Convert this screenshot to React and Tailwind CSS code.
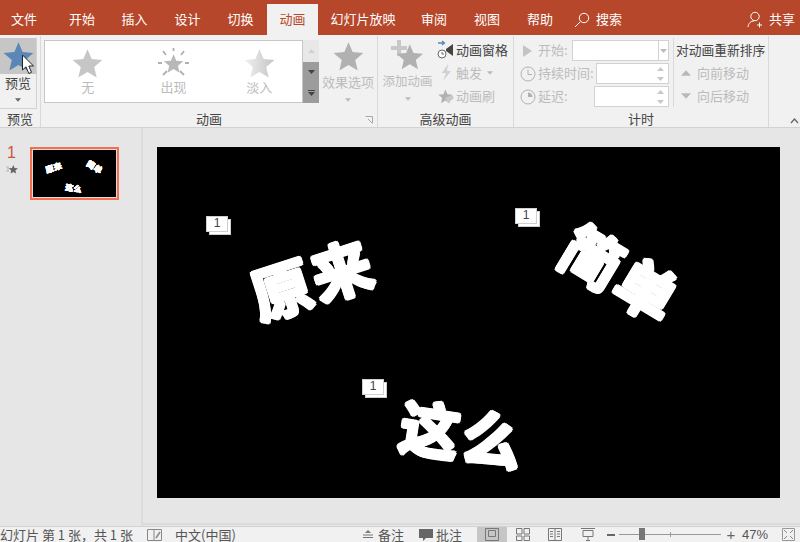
import React from 'react'

const STAR = '12,1 15.2,8.6 23.5,9.3 17.2,14.7 19.1,22.8 12,18.5 4.9,22.8 6.8,14.7 0.5,9.3 8.8,8.6'

function Star({ size = 30, color = '#b1b1b1', className = '' }) {
  return (
    <svg width={size} height={size} viewBox="0 0 24 24" className={className}>
      <polygon points={STAR} fill={color} />
    </svg>
  )
}

function Caret({ color = '#8a8a8a', up = false, w = 7, h = 4 }) {
  return (
    <svg width={w} height={h} viewBox="0 0 7 4" className="block">
      <polygon points={up ? '0,4 7,4 3.5,0' : '0,0 7,0 3.5,4'} fill={color} />
    </svg>
  )
}

function Group({ label, width, children, corner }) {
  return (
    <div className={`flex flex-col shrink-0 relative border-r border-[#d9d9d9] ${width}`}>
      <div className="h-[74px] flex">{children}</div>
      <div className="h-[17px] mt-[1px] text-center text-[13px] leading-[17px] text-[#444]">{label}</div>
      {corner && (
        <svg width="8" height="8" viewBox="0 0 8 8" className="absolute right-[4px] bottom-[3px]">
          <path d="M0.5 0.5H7.5V7.5M3 3L7 7" stroke="#a8a8a8" fill="none" />
        </svg>
      )}
    </div>
  )
}

function GalleryItem({ label, children }) {
  return (
    <div className="w-[86px] flex flex-col items-center pt-[7px]">
      {children}
      <span className="text-[13px] leading-[18px] text-[#bcbcbc] mt-[-1px]">{label}</span>
    </div>
  )
}

function ClockIcon({ pie = false }) {
  return (
    <svg width="16" height="16" viewBox="0 0 16 16" className="shrink-0">
      <circle cx="8" cy="8" r="7" fill="none" stroke="#b1b1b1" />
      {pie ? <path d="M8 8V3.5A4.5 4.5 0 0 1 12.5 8Z" fill="#b1b1b1" /> : <path d="M8 3.5V8.5H12" stroke="#b1b1b1" fill="none" />}
    </svg>
  )
}

function Spinner() {
  return (
    <div className="ml-auto flex flex-col gap-[6px] pr-[4px]">
      <Caret color="#c8c8c8" up />
      <Caret color="#c8c8c8" />
    </div>
  )
}

// text on the slide, placed on the slide's own canvas
function SlideWords() {
  const word = "absolute font-bold text-white whitespace-nowrap leading-none text-[60px] tracking-[3px] [text-shadow:2px_0_0_#fff,-2px_0_0_#fff,0_2px_0_#fff,0_-2px_0_#fff,1.5px_1.5px_0_#fff,-1.5px_1.5px_0_#fff,1.5px_-1.5px_0_#fff,-1.5px_-1.5px_0_#fff]"
  return (
    <>
      <div className={`${word} left-[92px] top-[100px] -rotate-[18deg]`}>原来</div>
      <div className={`${word} left-[402px] top-[95px] rotate-[31deg]`}>简单</div>
      <div className={`${word} left-[243px] top-[255px] rotate-[9deg]`}>这么</div>
    </>
  )
}

function Badge({ className }) {
  return (
    <div className={`absolute w-[22px] h-[16px] ${className}`}>
      <div className="absolute left-[3px] top-[3px] w-[22px] h-[16px] bg-white border border-[#cfcfcf]" />
      <div className="absolute inset-0 bg-white border border-[#cfcfcf] text-[12px] leading-[13px] text-center text-[#444] font-['Liberation_Sans',sans-serif]">1</div>
    </div>
  )
}

function Tab({ width, active, children }) {
  return (
    <div className={`${width} shrink-0 h-[31px] text-center text-[13px] leading-[30px] ${active ? 'bg-[#f1f1f1] text-[#b7472a]' : 'text-white'}`}>
      {children}
    </div>
  )
}

export default function App() {
  return (
    <div className="w-[800px] h-[542px] overflow-hidden flex flex-col bg-[#e6e6e6] font-['Noto_Sans_CJK_SC',sans-serif] relative">
      {/* tabs */}
      <div className="h-[35px] bg-[#b7472a] flex items-end shrink-0">
        <Tab width="w-[48px]">文件</Tab>
        <div className="w-[8px]" />
        <Tab width="w-[52px]">开始</Tab>
        <Tab width="w-[53px]">插入</Tab>
        <Tab width="w-[53px]">设计</Tab>
        <Tab width="w-[53px]">切换</Tab>
        <Tab width="w-[51px]" active>动画</Tab>
        <Tab width="w-[90px]">幻灯片放映</Tab>
        <Tab width="w-[52px]">审阅</Tab>
        <Tab width="w-[54px]">视图</Tab>
        <Tab width="w-[52px]">帮助</Tab>
        <div className="h-[31px] flex items-center ml-[8px] text-white text-[13px] gap-[6px]">
          <svg width="16" height="16" viewBox="0 0 16 16">
            <circle cx="10" cy="6" r="4.7" fill="none" stroke="white" />
            <path d="M6.5 9.5L1 15" stroke="white" />
          </svg>
          <span className="pb-[1px]">搜索</span>
        </div>
        <div className="h-[31px] flex items-center ml-auto pr-[5px] text-white text-[13px] gap-[6px]">
          <svg width="16" height="17" viewBox="0 0 16 17">
            <circle cx="8" cy="5.5" r="4.2" fill="none" stroke="white" />
            <path d="M1 16C1.5 12 4 10 7 10M10 14H15M12.5 11.5V16.5" stroke="white" fill="none" />
          </svg>
          <span className="pb-[1px]">共享</span>
        </div>
      </div>

      {/* ribbon */}
      <div className="h-[93px] bg-[#f1f1f1] flex shrink-0 pt-[1px] border-b border-[#d2d2d2]">
        <Group label="预览" width="w-[41px]">
          <div className="w-[37px] h-[71px] border-r border-b border-[#d2d2d2] flex flex-col items-center mt-[2px]">
            <div className="w-full h-[36px] bg-[#c6c6c6] flex items-center justify-center">
              <Star size={31} color="#5a87b8" />
            </div>
            <span className="text-[13px] leading-[18px] text-[#444]">预览</span>
            <div className="mt-[6px]"><Caret color="#666" w={6} /></div>
          </div>
        </Group>

        <Group label="动画" width="w-[337px]" corner>
          <div className="mt-[4px] ml-[3px] flex h-[63px] w-[276px] shrink-0">
            <div className="w-[259px] border border-[#c6c6c6] bg-white flex">
              <GalleryItem label="无"><Star size={31} color="#c6c6c6" /></GalleryItem>
              <GalleryItem label="出现">
                <svg width="31" height="31" viewBox="0 0 31 31">
                  <g transform="translate(5.5 5.5) scale(0.84)"><polygon points={STAR} fill="#b8b8b8" /></g>
                  <path d="M15.5 0V3M5 3L8 7M26 3L23 7M0 15H4M31 15H27M5 27L9 23M26 27L22 23" stroke="#b0b0b0" strokeWidth="1.8" />
                </svg>
              </GalleryItem>
              <GalleryItem label="淡入">
                <svg width="31" height="31" viewBox="0 0 24 24">
                  <defs>
                    <linearGradient id="fade" x1="0" x2="1" y1="0" y2="0">
                      <stop offset="0" stopColor="#f0f0f0" />
                      <stop offset="1" stopColor="#c4c4c4" />
                    </linearGradient>
                  </defs>
                  <polygon points={STAR} fill="url(#fade)" />
                </svg>
              </GalleryItem>
            </div>
            <div className="w-[16px] flex flex-col shrink-0">
              <div className="h-[22px] bg-[#e8e8e8] flex items-center justify-center"><Caret color="#d0d0d0" up /></div>
              <div className="h-[20px] bg-[#9c9c9c] flex items-center justify-center"><Caret color="#444" /></div>
              <div className="h-[21px] bg-[#9c9c9c] flex flex-col items-center justify-center gap-[1px]">
                <div className="w-[7px] h-[1px] bg-[#444]" />
                <Caret color="#444" />
              </div>
            </div>
          </div>
          <div className="flex-1 flex flex-col items-center pt-[5px] -ml-[1px]">
            <Star size={31} color="#b1b1b1" />
            <span className="text-[13px] leading-[18px] text-[#bcbcbc] mt-[1px] whitespace-nowrap">效果选项</span>
            <div className="mt-[7px]"><Caret color="#bbb" w={6} /></div>
          </div>
        </Group>

        <Group label="高级动画" width="w-[136px]">
          <div className="w-[59px] flex flex-col items-center pt-[4px] shrink-0">
            <svg width="34" height="32" viewBox="0 0 34 32">
              <path d="M6 0H10V6H16V10H10V16H6V10H0V6H6Z" fill="#c8c8c8" />
              <g transform="translate(5 3) scale(1.15)"><polygon points={STAR} fill="#b1b1b1" /></g>
            </svg>
            <span className="text-[12.5px] leading-[18px] text-[#bcbcbc] whitespace-nowrap">添加动画</span>
            <div className="mt-[7px]"><Caret color="#bbb" w={6} /></div>
          </div>
          <div className="flex flex-col pt-[2px] text-[13px] leading-[23px] text-[#bcbcbc]">
            <div className="flex items-center gap-[1px] text-[#444]">
              <svg width="18" height="20" viewBox="0 0 18 20">
                <path d="M1 3H7M5 1L7.5 3L5 5" stroke="#5a87b8" strokeWidth="1.3" fill="none" />
                <path d="M9 9L16 4V16L9 11Z" fill="#444" />
                <circle cx="5" cy="14" r="4" fill="white" stroke="#666" />
                <path d="M5 12V14H7" stroke="#666" fill="none" />
              </svg>
              动画窗格
            </div>
            <div className="flex items-center gap-[1px]">
              <svg width="18" height="20" viewBox="0 0 18 20">
                <path d="M11 1L5 10H9L6 18L14 8H10Z" fill="#d0d0d0" />
              </svg>
              <span>触发</span>
              <span className="ml-[4px]"><Caret color="#bbb" w={6} /></span>
            </div>
            <div className="flex items-center gap-[1px]">
              <svg width="18" height="20" viewBox="0 0 18 20">
                <g transform="translate(1 3) scale(0.62)"><polygon points={STAR} fill="#b1b1b1" /></g>
                <path d="M8 12L15 9L17 12L11 17Z" fill="#c8c8c8" />
              </svg>
              动画刷
            </div>
          </div>
        </Group>

        <Group label="计时" width="w-[255px]">
          <div className="w-[159px] flex flex-col pl-[6px] pt-[4px] gap-[2px] text-[13px] text-[#bcbcbc] shrink-0">
            <div className="h-[21px] flex items-center">
              <svg width="16" height="16" viewBox="0 0 16 16" className="shrink-0"><polygon points="3,2 12,8 3,14" fill="#c4c4c4" /></svg>
              <span className="ml-[2px] w-[34px] whitespace-nowrap pb-[2px]">开始:</span>
              <div className="w-[97px] h-[21px] bg-white border border-[#d2d2d2] flex items-center justify-end shrink-0">
                <div className="w-[10px] h-full border-l border-[#d2d2d2] flex items-center justify-center"><Caret color="#bbb" /></div>
              </div>
            </div>
            <div className="h-[21px] flex items-center">
              <ClockIcon />
              <span className="ml-[2px] w-[58px] whitespace-nowrap pb-[2px]">持续时间:</span>
              <div className="w-[73px] h-[21px] bg-white border border-[#d2d2d2] flex items-center shrink-0"><Spinner /></div>
            </div>
            <div className="h-[21px] flex items-center">
              <ClockIcon pie />
              <span className="ml-[2px] w-[56px] whitespace-nowrap pb-[2px]">延迟:</span>
              <div className="w-[75px] h-[21px] bg-white border border-[#d2d2d2] flex items-center shrink-0"><Spinner /></div>
            </div>
          </div>
          <div className="flex flex-col border-l border-[#d9d9d9] my-[2px] pl-[2px] text-[13px] leading-[23px] text-[#bcbcbc] whitespace-nowrap">
            <span className="text-[#444] text-[12.75px] leading-[23px]">对动画重新排序</span>
            <div className="flex items-center pl-[5px] gap-[6px]"><Caret color="#b8b8b8" up w={10} h={6} />向前移动</div>
            <div className="flex items-center pl-[5px] gap-[6px]"><Caret color="#b8b8b8" w={10} h={6} />向后移动</div>
          </div>
        </Group>

        <div className="flex-1 flex items-end justify-end pr-[1px] pb-[3px]">
          <svg width="9" height="6" viewBox="0 0 9 6"><path d="M1 5L4.5 1L8 5" stroke="#666" strokeWidth="1.3" fill="none" /></svg>
        </div>
      </div>

      {/* work area */}
      <div className="flex-1 flex min-h-0">
        <div className="w-[143px] shrink-0 border-r-2 border-[#dcdcdc] flex pt-[19px]">
          <div className="w-[30px] flex flex-col items-center">
            <span className="text-[16px] leading-[18px] text-[#c8553a] font-['Liberation_Sans',sans-serif] -ml-[7px] -mt-[3px]">1</span>
            <svg width="12" height="10" viewBox="0 0 12 10" className="-ml-[7px] mt-[2px]">
              <g transform="translate(2.5 0.5) scale(0.4)"><polygon points={STAR} fill="#666" /></g>
              <path d="M0 3H3M1 5H3M0 7H3" stroke="#999" strokeWidth="0.7" />
            </svg>
          </div>
          <div className="w-[89px] h-[53px] border-2 border-[#f0704f] shrink-0">
            <div className="w-full h-full bg-black border border-[#dcdcdc] overflow-hidden relative">
              <div className="absolute left-0 top-0 w-[623px] h-[351px] origin-top-left scale-[0.133]">
                <SlideWords />
              </div>
            </div>
          </div>
        </div>
        <div className="flex-1 flex flex-col min-w-0">
          <div className="flex-1 pt-[19px] pl-[14px]">
            <div className="w-[623px] h-[351px] bg-black relative overflow-hidden">
              <SlideWords />
              <Badge className="left-[49px] top-[69px]" />
              <Badge className="left-[358px] top-[61px]" />
              <Badge className="left-[205px] top-[232px]" />
            </div>
          </div>
          <div className="h-[3px] border-t-2 border-[#dcdcdc]" />
        </div>
      </div>

      {/* status bar */}
      <div className="h-[16px] bg-[#f1f1f1] border-t border-[#d2d2d2] flex items-center shrink-0 text-[13px] leading-[16px] text-[#555] whitespace-nowrap overflow-hidden">
        <span className="w-[147px] shrink-0">幻灯片 第 1 张，共 1 张</span>
        <svg width="15" height="12" viewBox="0 0 15 12" className="shrink-0">
          <path d="M0.5 0.5H7V11.5H0.5ZM7 0.5H14.5V11.5H7" fill="none" stroke="#888" />
          <path d="M9 9L13 3" stroke="#888" strokeWidth="1.5" />
        </svg>
        <span className="ml-[13px] w-[188px] shrink-0">中文(中国)</span>
        <svg width="10" height="10" viewBox="0 0 10 10" className="shrink-0">
          <polygon points="5,0 8,3 2,3" fill="#777" />
          <path d="M0 5H10M0 7.5H10" stroke="#777" />
        </svg>
        <span className="ml-[5px] w-[40px] shrink-0">备注</span>
        <svg width="16" height="14" viewBox="0 0 16 14" className="shrink-0">
          <path d="M1 1H15V10H8L5 13V10H1Z" fill="#666" />
        </svg>
        <span className="ml-[2px] w-[41px] shrink-0">批注</span>
        <div className="w-[30px] h-full bg-[#c6c6c6] flex items-center justify-center shrink-0">
          <svg width="14" height="13" viewBox="0 0 14 13"><path d="M0.5 0.5H13.5V12.5H0.5ZM3.5 2.5H10.5V8.5H3.5Z" fill="none" stroke="#777" /></svg>
        </div>
        <div className="w-[32px] flex justify-center shrink-0">
          <svg width="14" height="13" viewBox="0 0 14 13"><path d="M0.5 0.5H6V6H0.5ZM8 0.5H13.5V6H8ZM0.5 8H6V12.5H0.5ZM8 8H13.5V12.5H8Z" fill="none" stroke="#777" /></svg>
        </div>
        <div className="w-[32px] flex justify-center shrink-0">
          <svg width="14" height="13" viewBox="0 0 14 13"><path d="M0.5 0.5H13.5V12.5H0.5ZM7 0.5V12.5M2 3.5H5M2 6H5M2 8.5H5M9 3.5H12M9 6H12M9 8.5H12" fill="none" stroke="#777" /></svg>
        </div>
        <div className="w-[33px] flex justify-center shrink-0">
          <svg width="14" height="13" viewBox="0 0 14 13"><path d="M0 0.5H14M2 2.5H12V8.5H2ZM7 8.5V12M5 12.5H9" fill="none" stroke="#777" /></svg>
        </div>
        <div className="w-[8px] h-[2px] bg-[#666] ml-[3px] shrink-0" />
        <div className="w-[102px] h-[1px] bg-[#999] ml-[4px] relative shrink-0">
          <div className="absolute left-[20px] top-[-6px] w-[6px] h-[12px] bg-[#777]" />
          <div className="absolute left-[51px] top-[-2px] w-[1px] h-[5px] bg-[#999]" />
        </div>
        <span className="ml-[3px] text-[15px] leading-[14px] font-['Liberation_Sans',sans-serif] w-[14px] shrink-0 text-center text-[#666]">+</span>
        <span className="ml-[4px] text-[13px] font-['Liberation_Sans',sans-serif] w-[35px] shrink-0">47%</span>
        <svg width="13" height="13" viewBox="0 0 13 13" className="ml-[5px] shrink-0">
          <path d="M0.5 0.5H12.5V12.5H0.5Z" fill="none" stroke="#999" />
          <path d="M2 2L5 5M11 2L8 5M2 11L5 8M11 11L8 8" stroke="#888" />
        </svg>
      </div>

      {/* mouse pointer over the preview button */}
      <svg width="16" height="22" viewBox="0 0 16 22" className="absolute left-[21px] top-[54px]">
        <path d="M1.5 1V16L5 12.8L7.8 19.5L10.5 18.3L7.8 12H12.5Z" fill="white" stroke="#222" strokeWidth="1" />
      </svg>
    </div>
  )
}
